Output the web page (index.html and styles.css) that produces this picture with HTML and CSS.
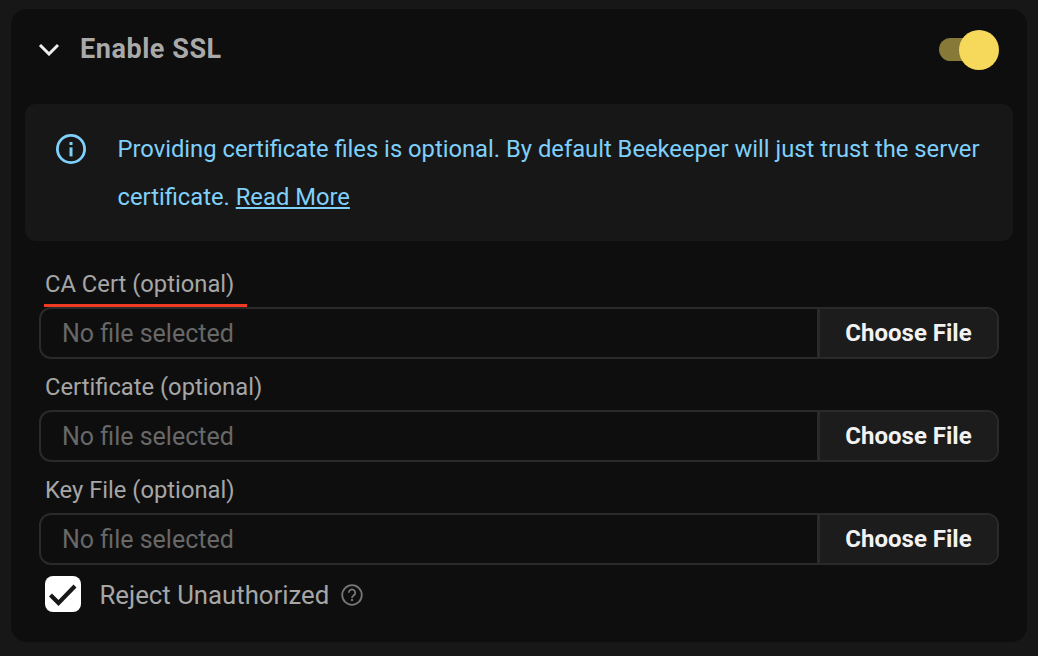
FILE: index.html
```html
<!DOCTYPE html>
<html lang="en">
<head>
<meta charset="utf-8">
<title>Enable SSL</title>
<link rel="stylesheet" href="styles.css">
</head>
<body>
<section class="card">
  <header class="head">
    <svg class="chevron" width="22" height="14" viewBox="0 0 22 14"><path d="M2 3l9 9 9-9" fill="none" stroke="#eeeeee" stroke-width="3"/></svg>
    <h2 class="title">Enable SSL</h2>
    <span class="toggle"><span class="knob"></span></span>
  </header>
  <div class="banner">
    <svg class="info" width="32" height="32" viewBox="0 0 32 32"><circle cx="16" cy="16" r="13.6" fill="none" stroke="#7fd0fb" stroke-width="2.8"/><rect x="14.5" y="14.4" width="3" height="9" fill="#7fd0fb"/><rect x="14.5" y="9" width="3" height="3" fill="#7fd0fb"/></svg>
    <p class="banner-text">Providing certificate files is optional. By default Beekeeper will just trust the server certificate. <a class="link" href="#">Read More</a></p>
  </div>
  <div class="fields">
    <div class="field">
      <label class="label label-active">CA Cert (optional)</label>
      <div class="file"><span class="file-name">No file selected</span><span class="file-btn">Choose File</span></div>
    </div>
    <div class="field">
      <label class="label">Certificate (optional)</label>
      <div class="file"><span class="file-name">No file selected</span><span class="file-btn">Choose File</span></div>
    </div>
    <div class="field">
      <label class="label">Key File (optional)</label>
      <div class="file"><span class="file-name">No file selected</span><span class="file-btn">Choose File</span></div>
    </div>
  </div>
  <div class="check-row">
    <span class="box"><svg width="36" height="36" viewBox="0 0 36 36"><path d="M5.500 19l8 8L30 10" fill="none" stroke="#171717" stroke-width="4.200"/></svg></span>
    <span class="check-label">Reject Unauthorized</span>
    <svg class="help" width="22" height="22" viewBox="0 0 22 22"><circle cx="11" cy="11" r="9.800" fill="none" stroke="#777" stroke-width="1.800"/><path d="M7.800 8.700a3.200 3.200 0 1 1 5 2.600c-1.100.8-1.800 1.300-1.800 2.700" fill="none" stroke="#777" stroke-width="1.800"/><rect x="10" y="15" width="2" height="2" fill="#777"/></svg>
  </div>
</section>
</body>
</html>
```
FILE: styles.css
```css
* { box-sizing: border-box; }
html, body { margin: 0; height: 100%; }
body {
  background: #171717;
  padding: 9px 11px 14px;
  font-family: Roboto, "Liberation Sans", sans-serif;
  overflow: hidden;
}
.card {
  height: 633px;
  background: #0e0e0e;
  border-radius: 16px;
  padding: 0 14px;
}
.head {
  display: flex;
  align-items: center;
  height: 95px;
  padding: 0 14px 15px 13px;
}
.chevron { margin-right: 20px; }
.title {
  margin: 0;
  flex: 1;
  font-size: 27px;
  font-weight: 700;
  color: #a9a9a9;
  letter-spacing: 0.55px;
}
.toggle {
  position: relative;
  height: 23px;
  background: #877a38;
  border-radius: 12px;
  width: 46px;
  margin-right: 14px;
}
.knob {
  position: absolute;
  right: -14px;
  top: -8px;
  width: 40px;
  height: 40px;
  border-radius: 50%;
  background: #f6d85b;
}
.banner {
  display: flex;
  align-items: flex-start;
  height: 137px;
  padding: 21px 30px 0 30px;
  background: #171717;
  border-radius: 11px;
}
.info { flex: none; margin: 8px 0 0 0; }
.banner-text {
  margin: 0 0 0 30.500px;
  font-size: 23.750px;
  line-height: 48px;
  color: #7fd0fb;
}
.link { color: #7fd0fb; text-decoration: underline; }
.fields { margin-left: 14px; }
.label {
  display: block;
  width: fit-content;
  height: 42px;
  margin: 9px 0 0 5px;
  padding: 0 13px 0 1px;
  font-size: 23.750px;
  line-height: 38px;
  color: #a6a6a6;
}
.label-active {
  border-bottom: 3px solid #ef3a24;
  height: 46px;
  line-height: 46px;
  margin-top: 20px;
}
.file {
  display: flex;
  height: 52px;
  width: 960px;
  border: 2px solid #2a2a2a;
  border-radius: 12px;
  overflow: hidden;
}
.file-name {
  flex: 1;
  padding: 1px 0 0 21px;
  font-size: 25px;
  line-height: 48px;
  color: #686868;
}
.file-btn {
  width: 180px;
  background: #1c1c1c;
  border-left: 3px solid #2a2a2a;
  text-align: center;
  font-size: 24px;
  font-weight: 700;
  line-height: 48px;
  color: #f2f2f2;
}
.check-row {
  display: flex;
  align-items: center;
  margin: 11px 0 0 20px;
  height: 36px;
}
.box {
  width: 36px;
  height: 36px;
  background: #fff;
  border-radius: 8px;
}
.box svg { display: block; }
.check-label {
  margin-left: 18.500px;
  padding-top: 2px;
  font-size: 25.750px;
  color: #a6a6a6;
}
.help { margin: 2px 0 0 12px; }
```
